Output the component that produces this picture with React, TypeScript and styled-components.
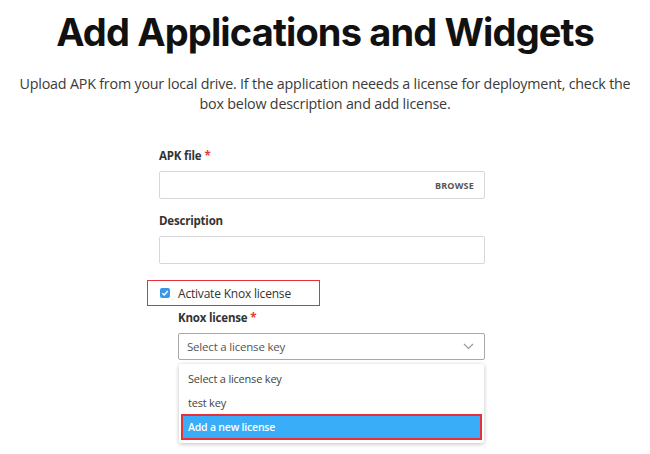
import React from "react";
import styled, { createGlobalStyle } from "styled-components";

const Global = createGlobalStyle`
  html, body { margin: 0; padding: 0; background: #fff; }
  body { font-family: "Open Sans", "Noto Sans", sans-serif; color: #333; }
  * { box-sizing: border-box; }
`;

const Page = styled.div`
  width: 650px;
  height: 454px;
  overflow: hidden;
  display: flex;
  flex-direction: column;
`;

const Title = styled.h1`
  margin: 8px 0 0;
  text-align: center;
  font-family: "Inter", sans-serif;
  font-weight: 700;
  font-size: 38px;
  line-height: 48px;
  letter-spacing: -0.85px;
  color: #111;
`;

const Intro = styled.p`
  margin: 18px 0 0;
  text-align: center;
  font-size: 14.3px;
  line-height: 20px;
  color: #3a3a3a;
  letter-spacing: -0.2px;
`;

const Form = styled.div`
  margin: 34px 0 0 159px;
  width: 326px;
  display: flex;
  flex-direction: column;
`;

const Label = styled.div`
  font-size: 11.5px;
  font-weight: 700;
  color: #333;
  line-height: 16px;
  letter-spacing: -0.2px;
`;

const Req = styled.span`
  color: #e53935;
  margin-left: 3px;
`;

const Input = styled.div`
  margin-top: 7px;
  height: 28px;
  border: 1px solid #d8d8d8;
  border-radius: 2px;
  display: flex;
  align-items: center;
  justify-content: flex-end;
  padding-right: 10px;
`;

const Browse = styled.span`
  font-size: 9px;
  font-weight: 700;
  color: #555;
  letter-spacing: 0.2px;
`;

const Field = styled.div<{ $mt: number }>`
  margin-top: ${(p) => p.$mt}px;
  display: flex;
  flex-direction: column;
`;

const CheckRow = styled.div`
  margin: 16px 0 0 -12px;
  width: 173px;
  height: 26px;
  border: 1.5px solid #e8303a;
  display: flex;
  align-items: center;
  gap: 8px;
  padding-left: 12px;
`;

const Box = styled.span`
  width: 10px;
  height: 10px;
  border-radius: 2px;
  background: #3a97e8;
  display: flex;
  align-items: center;
  justify-content: center;
`;

const CheckText = styled.span`
  font-size: 12px;
  color: #333;
  letter-spacing: -0.2px;
`;

const Knox = styled.div`
  margin-left: 19px;
  display: flex;
  flex-direction: column;
`;

const KnoxLabel = styled(Label)`
  margin-top: 4px;
`;

const Select = styled.div`
  margin-top: 7px;
  height: 27px;
  border: 1px solid #a8a8a8;
  border-radius: 2px;
  display: flex;
  align-items: center;
  justify-content: space-between;
  padding: 0 10px 0 8px;
  font-size: 11.5px;
  color: #555;
  letter-spacing: -0.2px;
`;

const Menu = styled.div`
  margin: 4px 1px 0;
  background: #fff;
  border-radius: 2px;
  box-shadow: 0 1px 4px rgba(0, 0, 0, 0.25);
  display: flex;
  flex-direction: column;
  padding: 2px 2px 3px;
`;

const Option = styled.div<{ $active?: boolean }>`
  height: ${(p) => (p.$active ? 26 : 24)}px;
  display: flex;
  align-items: center;
  padding-left: ${(p) => (p.$active ? 5 : 7)}px;
  font-size: ${(p) => (p.$active ? 10.5 : 11)}px;
  letter-spacing: -0.2px;
  color: ${(p) => (p.$active ? "#fff" : "#444")};
  font-weight: ${(p) => (p.$active ? 600 : 400)};
  background: ${(p) => (p.$active ? "#39adf7" : "transparent")};
  border: ${(p) => (p.$active ? "2px solid #e8303a" : "none")};
`;

export default function App() {
  return (
    <Page>
      <Global />
      <Title>Add Applications and Widgets</Title>
      <Intro>
        Upload APK from your local drive. If the application neeeds a license for deployment, check the
        <br />
        box below description and add license.
      </Intro>
      <Form>
        <Label>
          APK file<Req>*</Req>
        </Label>
        <Input>
          <Browse>BROWSE</Browse>
        </Input>
        <Field $mt={14}>
          <Label>Description</Label>
          <Input />
        </Field>
        <CheckRow>
          <Box>
            <svg width="8" height="8" viewBox="0 0 8 8">
              <path d="M1.3 4.2 L3.2 6 L6.8 2" fill="none" stroke="#fff" strokeWidth="1.4" />
            </svg>
          </Box>
          <CheckText>Activate Knox license</CheckText>
        </CheckRow>
        <Knox>
          <KnoxLabel>
            Knox license<Req>*</Req>
          </KnoxLabel>
          <Select>
            <span>Select a license key</span>
            <svg width="11" height="7" viewBox="0 0 11 7">
              <path d="M1 1 L5.5 5.5 L10 1" fill="none" stroke="#999" strokeWidth="1.2" />
            </svg>
          </Select>
          <Menu>
            <Option>Select a license key</Option>
            <Option>test key</Option>
            <Option $active>Add a new license</Option>
          </Menu>
        </Knox>
      </Form>
    </Page>
  );
}
